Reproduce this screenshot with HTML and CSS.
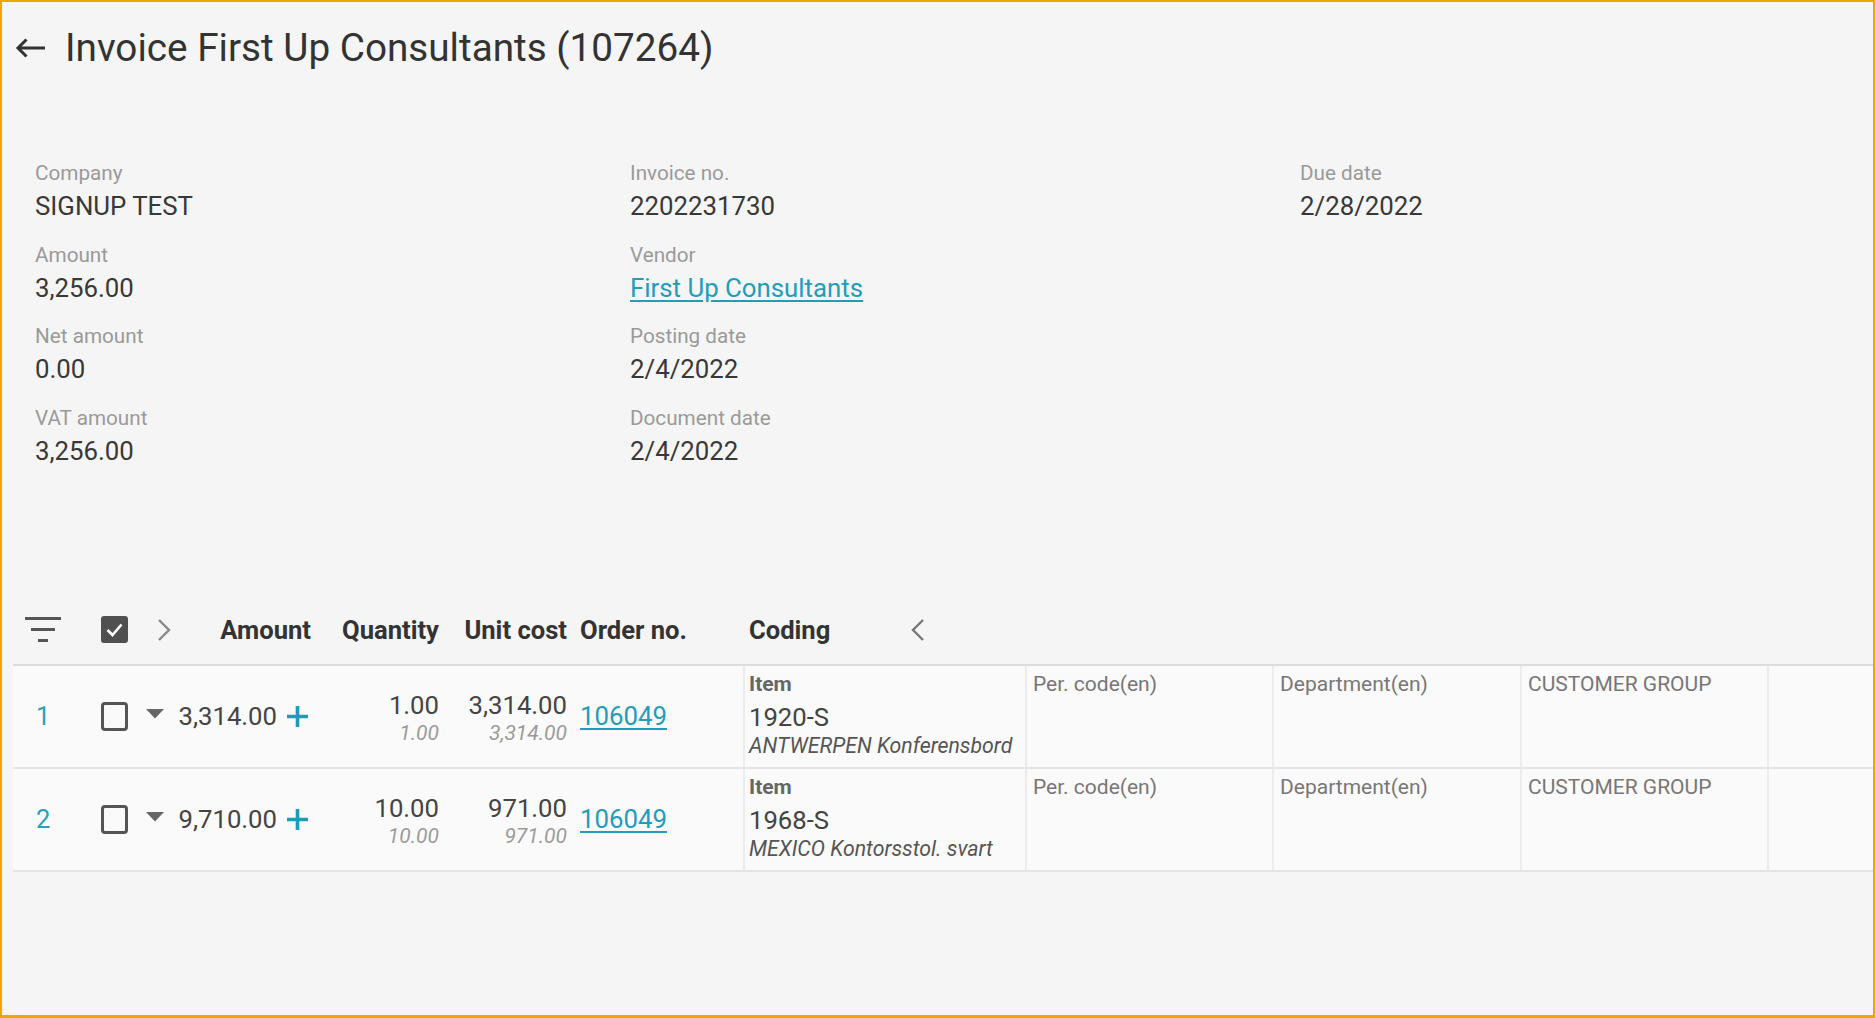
FILE: index.html
```html
<!DOCTYPE html>
<html lang="en">
<head>
<meta charset="utf-8">
<title>Invoice First Up Consultants (107264)</title>
<link rel="stylesheet" href="styles.css">
</head>
<body>
<div class="page">
  <header class="title-bar">
    <svg class="back" width="32" height="22" viewBox="0 0 32 22"><path d="M31 11H4M12.5 2.5L4 11l8.5 8.5" fill="none" stroke="#333" stroke-width="3"/></svg>
    <h1 class="title">Invoice First Up Consultants (107264)</h1>
  </header>

  <section class="details">
    <div class="col">
      <div class="field"><div class="label">Company</div><div class="value">SIGNUP TEST</div></div>
      <div class="field"><div class="label">Amount</div><div class="value">3,256.00</div></div>
      <div class="field"><div class="label">Net amount</div><div class="value">0.00</div></div>
      <div class="field"><div class="label">VAT amount</div><div class="value">3,256.00</div></div>
    </div>
    <div class="col">
      <div class="field"><div class="label">Invoice no.</div><div class="value">2202231730</div></div>
      <div class="field"><div class="label">Vendor</div><div class="value"><a class="link" href="#">First Up Consultants</a></div></div>
      <div class="field"><div class="label">Posting date</div><div class="value">2/4/2022</div></div>
      <div class="field"><div class="label">Document date</div><div class="value">2/4/2022</div></div>
    </div>
    <div class="col">
      <div class="field"><div class="label">Due date</div><div class="value">2/28/2022</div></div>
    </div>
  </section>

  <section class="table">
    <div class="trow thead">
      <div class="c-num">
        <svg width="36" height="25" viewBox="0 0 36 25"><rect x="0" y="0" width="36" height="3" fill="#555"/><rect x="6" y="11" width="24" height="3" fill="#555"/><rect x="13" y="22" width="10" height="3" fill="#555"/></svg>
      </div>
      <div class="c-chk"><span class="cb cb-on"><svg width="27" height="27" viewBox="0 0 27 27"><polyline points="6.5,14 11.5,19 20.5,8.5" fill="none" stroke="#fff" stroke-width="2.6"/></svg></span></div>
      <div class="c-tri head-tri"><svg width="16" height="24" viewBox="0 0 16 24"><polyline points="3,2 13,12 3,22" fill="none" stroke="#888" stroke-width="2.4"/></svg></div>
      <div class="c-amt th">Amount</div>
      <div class="c-qty th">Quantity</div>
      <div class="c-unit th">Unit cost</div>
      <div class="c-order th">Order no.</div>
      <div class="c-coding th coding-head">Coding<svg class="collapse" width="16" height="24" viewBox="0 0 16 24"><polyline points="13,2 3,12 13,22" fill="none" stroke="#777" stroke-width="2.4"/></svg></div>
      <div class="c-empty"></div>
      <div class="c-empty"></div>
      <div class="c-empty"></div>
      <div class="c-empty"></div>
    </div>

    <div class="trow line">
      <div class="c-num num">1</div>
      <div class="c-chk"><span class="cb"></span></div>
      <div class="c-tri row-tri"><svg width="18" height="10" viewBox="0 0 18 10"><polygon points="0,0 18,0 9,9.5" fill="#666"/></svg></div>
      <div class="c-amt amt">3,314.00<svg class="plus" width="23" height="23" viewBox="0 0 23 23"><path d="M11.5 1v21M1 11.5h21" stroke="#1c9cb9" stroke-width="3.6"/></svg></div>
      <div class="c-qty stack"><span class="big">1.00</span><span class="sub">1.00</span></div>
      <div class="c-unit stack"><span class="big">3,314.00</span><span class="sub">3,314.00</span></div>
      <div class="c-order"><a class="link" href="#">106049</a></div>
      <div class="c-coding cell">
        <span class="item-label">Item</span>
        <span class="item-code">1920-S</span>
        <span class="item-desc">ANTWERPEN Konferensbord</span>
      </div>
      <div class="cell"><span class="dim-label">Per. code(en)</span></div>
      <div class="cell"><span class="dim-label">Department(en)</span></div>
      <div class="cell"><span class="dim-label">CUSTOMER GROUP</span></div>
      <div class="cell"></div>
    </div>

    <div class="trow line">
      <div class="c-num num">2</div>
      <div class="c-chk"><span class="cb"></span></div>
      <div class="c-tri row-tri"><svg width="18" height="10" viewBox="0 0 18 10"><polygon points="0,0 18,0 9,9.5" fill="#666"/></svg></div>
      <div class="c-amt amt">9,710.00<svg class="plus" width="23" height="23" viewBox="0 0 23 23"><path d="M11.5 1v21M1 11.5h21" stroke="#1c9cb9" stroke-width="3.6"/></svg></div>
      <div class="c-qty stack"><span class="big">10.00</span><span class="sub">10.00</span></div>
      <div class="c-unit stack"><span class="big">971.00</span><span class="sub">971.00</span></div>
      <div class="c-order"><a class="link" href="#">106049</a></div>
      <div class="c-coding cell">
        <span class="item-label">Item</span>
        <span class="item-code">1968-S</span>
        <span class="item-desc">MEXICO Kontorsstol. svart</span>
      </div>
      <div class="cell"><span class="dim-label">Per. code(en)</span></div>
      <div class="cell"><span class="dim-label">Department(en)</span></div>
      <div class="cell"><span class="dim-label">CUSTOMER GROUP</span></div>
      <div class="cell"></div>
    </div>
  </section>
</div>
</body>
</html>
```

FILE: styles.css
```css
html, body {
  margin: 0;
  padding: 0;
}

body {
  font-family: Roboto, "Liberation Sans", Arial, sans-serif;
  color: #333;
}

.page {
  width: 1875px;
  height: 1018px;
  box-sizing: border-box;
  border: 2px solid #f5a300;
  border-bottom-width: 3px;
  background: #f5f5f5;
  overflow: hidden;
}

/* Title */
.title-bar {
  display: flex;
  align-items: center;
  gap: 19px;
  padding: 23px 0 0 12px;
}

.back {
  display: block;
}

.title {
  margin: 0;
  font-size: 38.7px;
  line-height: 46px;
  font-weight: 400;
  color: #333;
}

/* Details */
.details {
  display: grid;
  grid-template-columns: 595px 670px 1fr;
  padding-left: 33px;
  margin-top: 90px;
}

.col {
  display: flex;
  flex-direction: column;
  gap: 21.5px;
}

.field {
  display: flex;
  flex-direction: column;
  gap: 6px;
}

.label {
  font-size: 20.7px;
  line-height: 24px;
  color: #9a9a9a;
}

.value {
  font-size: 25.8px;
  line-height: 30px;
  color: #383838;
}

.link {
  color: #1f9dbb;
  text-decoration: underline;
  text-underline-offset: 3px;
}

/* Table */
.table {
  margin-top: 130px;
  margin-left: 11px;
}

.trow {
  display: grid;
  grid-template-columns: 75px 52px 35px 145px 128px 128px 167px 282px 247px 248px 247px 1fr;
}

.thead {
  height: 68px;
  align-items: center;
  border-bottom: 2px solid #dcdcdc;
}

.th {
  font-size: 25.6px;
  font-weight: 700;
  color: #333;
  line-height: 30px;
}

.c-num {
  padding-left: 12px;
  display: flex;
  align-items: center;
}

.c-chk {
  padding-left: 13px;
  display: flex;
  align-items: center;
}

.c-tri {
  display: flex;
  align-items: center;
}

.head-tri {
  padding-left: 16px;
}

.row-tri {
  padding-left: 6px;
  padding-bottom: 4px;
}

.c-amt {
  text-align: right;
  padding-right: 9px;
}

.c-qty,
.c-unit {
  text-align: right;
  padding-right: 9px;
}

.c-order {
  padding-left: 4px;
}

.coding-head {
  padding-left: 6px;
  display: flex;
  align-items: center;
}

.collapse {
  margin-left: 80px;
}

.cb {
  display: block;
  width: 27px;
  height: 27px;
  box-sizing: border-box;
  border-radius: 3px;
}

.cb-on {
  background: #505050;
}

.line .cb {
  width: 27px;
  height: 29px;
  border: 3px solid #555;
  border-radius: 4px;
}

.cb svg {
  display: block;
}

/* Lines */
.line {
  min-height: 101px;
  background: #fafafa;
  border-bottom: 2px solid #e4e4e4;
  align-items: center;
}

.num {
  padding-left: 23px;
  font-size: 25.5px;
  color: #2a9fbd;
}

.amt {
  display: flex;
  justify-content: flex-end;
  align-items: center;
  gap: 9px;
  padding-right: 11px;
  font-size: 25.7px;
  color: #444;
}

.stack {
  align-self: start;
  padding-top: 24px;
  display: flex;
  flex-direction: column;
  align-items: flex-end;
}

.big {
  font-size: 25.7px;
  line-height: 30px;
  color: #444;
}

.sub {
  font-size: 21px;
  line-height: 27px;
  font-style: italic;
  color: #9a9a9a;
}

.line .c-order {
  font-size: 25.8px;
}

.cell {
  align-self: stretch;
  border-left: 2px solid #ececec;
  padding: 5px 0 0 6px;
  display: flex;
  flex-direction: column;
}

.c-coding.cell {
  padding-left: 4px;
}

.item-label {
  font-size: 21px;
  line-height: 26px;
  font-weight: 700;
  color: #666;
}

.item-code {
  font-size: 25.7px;
  line-height: 40px;
  color: #444;
}

.item-desc {
  font-size: 21.3px;
  line-height: 18px;
  font-style: italic;
  color: #555;
  white-space: nowrap;
}

.dim-label {
  font-size: 21px;
  line-height: 26px;
  color: #777;
}
```
